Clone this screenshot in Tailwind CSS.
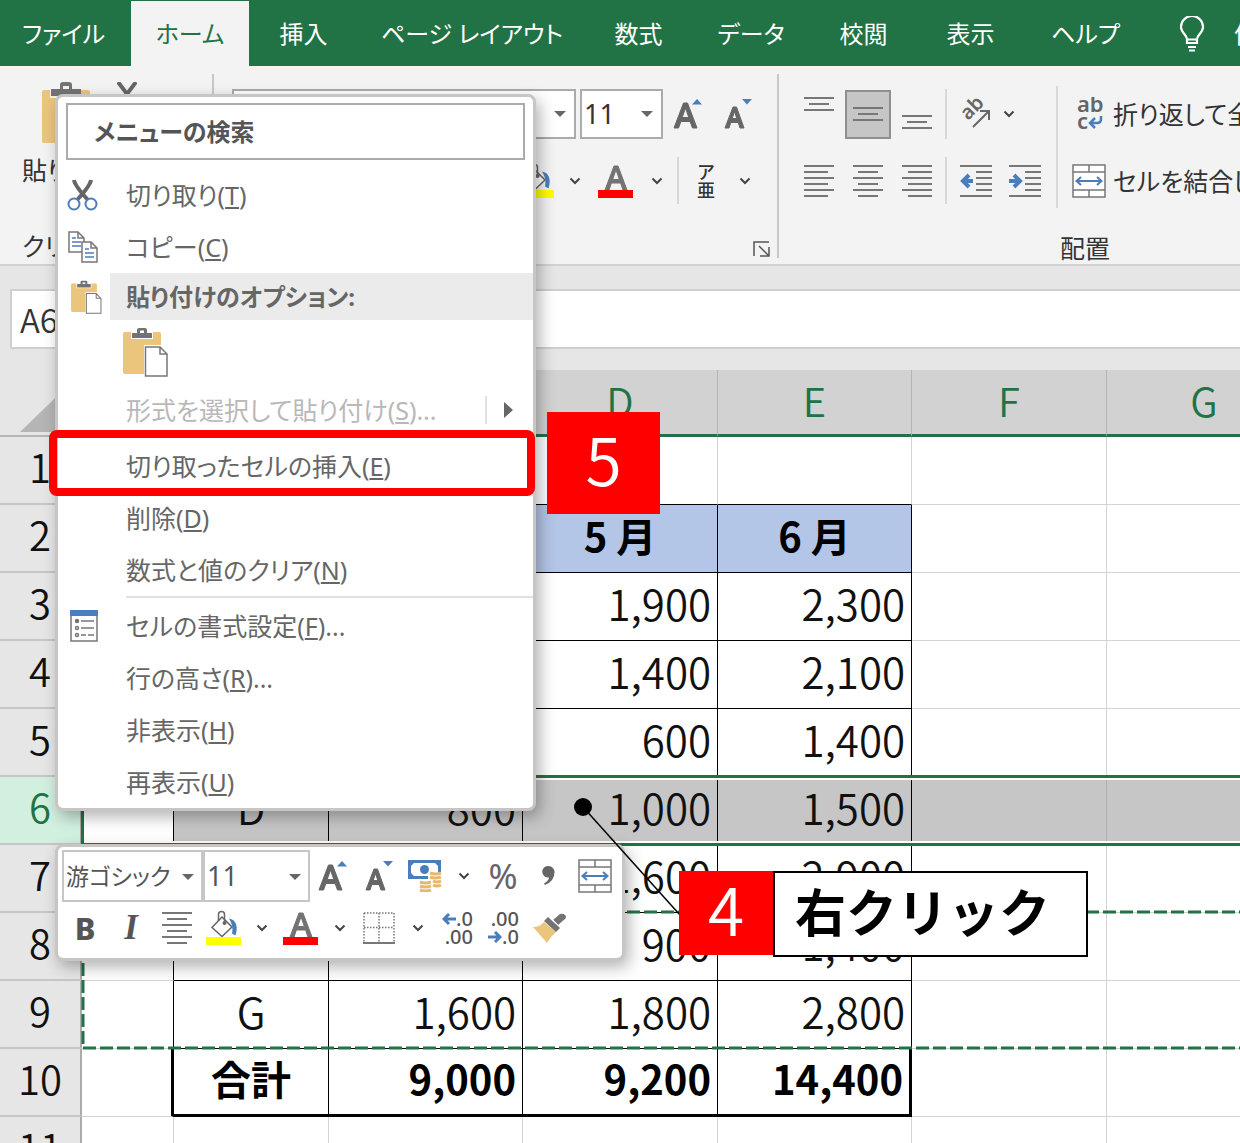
<!doctype html>
<html lang="ja">
<head>
    <meta charset="UTF-8">
    <meta name="viewport" content="width=device-width, initial-scale=1.0">
    <title>Excel</title>
    <script src="https://cdn.jsdelivr.net/npm/@tailwindcss/browser@4"></script>
</head>
<body class="bg-white">

<!-- shared icons -->
<svg class="hidden">
    <symbol id="chevron" viewBox="0 0 12 8"><path d="M1.500 1.500 6 6l4.500-4.500" fill="none" stroke="#444" stroke-width="2"/></symbol>
    <symbol id="arrow" viewBox="0 0 12 6"><path d="M0 0h12L6 6z" fill="#666"/></symbol>
    <symbol id="grow" viewBox="0 0 30 32">
        <path d="M1 30 10.500 5h4L24 30h-4.500l-2.400-6.500H7.900L5.500 30zM9.200 19.500h6.600L12.500 10z" fill="#666" stroke="#666"/>
        <path d="M19 6.500 24 1l5 5.500z" fill="#4a7ebb"/>
    </symbol>
    <symbol id="shrink" viewBox="0 0 30 32">
        <path d="M2 30 10 9h3.500L21 30h-4l-1.800-5.500H7.800L6 30zM9.200 20.500h4.600L11.500 13.500z" fill="#666" stroke="#666"/>
        <path d="M19 1h10l-5 5.500z" fill="#4a7ebb"/>
    </symbol>
    <symbol id="fill" viewBox="0 0 36 36">
        <path d="M17 7 7 17.500 17 26.500 27 17z" fill="#fff" stroke="#666" stroke-width="1.500"/>
        <path d="M13.500 11V4.500a3 3 0 0 1 6 0V13" fill="none" stroke="#666" stroke-width="1.500"/>
        <circle cx="19.500" cy="13" r="2" fill="#666"/>
        <path d="M24 8.500c7 1 9.500 8 6.500 17l-3.500-2c1-5 .500-9-3-15z" fill="#4a7ebb"/>
        <path d="M1 27h35v8H1z" fill="#ff0"/>
    </symbol>
    <symbol id="fontcolor" viewBox="0 0 36 36">
        <path d="M7 27 16 3h4l9 24h-4l-2.400-7h-9.200L11 27zM14.600 16.500h6.800L18 6.800z" fill="#737373" stroke="#737373"/>
        <path d="M0 27h35v8H0z" fill="red"/>
    </symbol>
    <symbol id="merge" viewBox="0 0 34 34">
        <path d="M1 1h32v32H1zM1 8h32M1 26h32M17 1v7M17 26v7" fill="#fff" stroke="#777" stroke-width="1.500"/>
        <path d="M5 17h24M9 13l-4.500 4L9 21M25 13l4.500 4-4.500 4" fill="none" stroke="#4a7ebb" stroke-width="2"/>
    </symbol>
    <symbol id="paste" viewBox="0 0 46 50">
        <rect x="1" y="5" width="38" height="42" rx="2" fill="#ecc57d"/>
        <path d="M9 4h22v8H9z" fill="#fff"/>
        <path d="M10 11V6h5V3q0-2 2-2h6q2 0 2 2v3h5v5zM18 3.500V6h4V3.500z" fill="#737373" fill-rule="evenodd"/>
        <path d="M22 18h18l7 7v26H22z" fill="#fff"/>
        <path d="M23.500 20H38l7 7v22H23.500zM38 20v7h7" fill="#fff" stroke="#777" stroke-width="1.500"/>
    </symbol>
    <symbol id="lines" viewBox="0 0 30 32">
        <path d="M0 1h30M5 7h20M0 13h30M5 19h20M0 25h30M5 31h20" stroke="#777" stroke-width="2"/>
    </symbol>
</svg>

<div class="relative h-screen overflow-hidden whitespace-nowrap bg-white font-['Noto_Sans','Noto_Sans_CJK_JP',sans-serif] text-[25px] leading-[32px] text-[#333]">

    <!-- tabs -->
    <nav class="flex h-[66px] bg-[#217346] pt-px text-[24px] text-white [font-feature-settings:'palt']">
        <button class="w-[131px] shrink-0 pr-1">ファイル</button>
        <button class="w-[118px] shrink-0 bg-[#f3f3f3] text-[#217346]">ホーム</button>
        <button class="w-[109px] shrink-0">挿入</button>
        <button class="w-[228px] shrink-0">ページ レイアウト</button>
        <button class="w-[105px] shrink-0">数式</button>
        <button class="w-[120px] shrink-0">データ</button>
        <button class="w-[105px] shrink-0">校閲</button>
        <button class="w-[109px] shrink-0">表示</button>
        <button class="w-[121px] shrink-0">ヘルプ</button>
        <button class="flex shrink-0 items-center gap-7 pl-8">
            <svg class="h-9 w-7" viewBox="0 0 28 36" fill="none" stroke="#fff" stroke-width="2.200">
                <path d="M9 27v-4c0-4-6-6-6-12a11 11 0 0 1 22 0c0 6-6 8-6 12v4zM9 23.500h10M10 31h8M11 34.500h6"/>
            </svg>
            何をしますか
        </button>
    </nav>

    <!-- ribbon -->
    <div class="flex h-[200px] border-b-2 border-[#d2d2d2] bg-[#f3f3f3] pt-2 [font-feature-settings:'palt']">
        <section class="flex h-[184px] w-[214px] shrink-0 flex-col justify-between border-r-2 border-[#c8c8c8] pl-[22px]">
            <div class="flex pt-2">
                <button class="flex flex-col items-start gap-2">
                    <svg class="ml-5 h-[64px] w-[50px]" viewBox="0 0 50 64">
                        <rect y="8" width="48" height="53" rx="2" fill="#ecc57d"/>
                        <path d="M8 6h31v10H8z" fill="#f3f3f3"/>
                        <path d="M9 14V7h9V3q0-3 3-3h6q3 0 3 3v4h9v7zM21 4v3h6V4z" fill="#737373" fill-rule="evenodd"/>
                    </svg>
                    <span>貼り付け</span>
                </button>
                <svg class="h-5 w-5" viewBox="0 0 20 20"><path d="m1 0 9 12L19 0M10 12l-5 7M10 12l5 7" fill="none" stroke="#666" stroke-width="4"/></svg>
            </div>
            <h2 class="-mb-1">クリップボード</h2>
        </section>

        <section class="h-[184px] w-[565px] shrink-0 border-r-2 border-[#c8c8c8] pt-[15px] pl-[18px]">
            <div class="flex items-center">
                <label class="relative mr-1">
                    <select aria-label="フォント" class="h-[50px] w-[344px] appearance-none border-2 border-[#ababab] bg-white px-1"><option></option></select>
                    <svg class="absolute top-[22px] right-[10px] h-[6px] w-3"><use href="#arrow"/></svg>
                </label>
                <label class="relative">
                    <select aria-label="フォント サイズ" class="h-[50px] w-[83px] appearance-none border-2 border-[#ababab] bg-white px-[2px] text-[27px]"><option>11</option></select>
                    <svg class="absolute top-[22px] right-[10px] h-[6px] w-3"><use href="#arrow"/></svg>
                </label>
                <button class="flex w-[50px] justify-center"><svg class="h-8 w-[30px]"><use href="#grow"/></svg></button>
                <button class="flex w-[50px] justify-center"><svg class="h-8 w-[30px]"><use href="#shrink"/></svg></button>
            </div>
            <div class="mt-[18px] flex h-[47px] items-center justify-end pr-4">
                <button class="flex w-[46px] justify-center"><svg class="h-9 w-9"><use href="#fill"/></svg></button>
                <button class="flex w-8 justify-center"><svg class="h-2 w-3"><use href="#chevron"/></svg></button>
                <button class="flex w-[50px] justify-center"><svg class="h-9 w-9"><use href="#fontcolor"/></svg></button>
                <button class="mr-1 flex w-8 justify-center"><svg class="h-2 w-3"><use href="#chevron"/></svg></button>
                <span class="h-full border-l-2 border-[#d8d8d8]"></span>
                <button class="ml-1 flex w-[46px] flex-col items-center text-[18px] leading-[18px] font-medium"><span>ア</span><span>亜</span></button>
                <button class="flex w-8 justify-center"><svg class="h-2 w-3"><use href="#chevron"/></svg></button>
            </div>
            <div class="mt-9 flex justify-end pr-[6px]">
                <button><svg class="h-[18px] w-[18px]" viewBox="0 0 18 18" fill="none" stroke="#555" stroke-width="1.500"><path d="M1 16V2h15M6 6l9 9M16 7v9H7"/></svg></button>
            </div>
        </section>

        <section class="w-[700px] shrink-0 pl-[15px]">
            <div class="flex">
                <div class="mt-[15px] grid grid-cols-[repeat(3,49px)] grid-rows-[50px_47px] place-items-center gap-y-[18px]">
                    <button class="pb-5"><svg class="h-4 w-[30px]" viewBox="0 0 30 16"><path d="M0 2h30M5 8h20M0 14h30" stroke="#777" stroke-width="2"/></svg></button>
                    <button class="flex h-[49px] w-[46px] items-center justify-center border-2 border-[#8f8f8f] bg-[#c6c6c6]"><svg class="h-4 w-[30px]" viewBox="0 0 30 16"><path d="M0 2h30M5 8h20M0 14h30" stroke="#777" stroke-width="2"/></svg></button>
                    <button class="pt-4"><svg class="h-4 w-[30px]" viewBox="0 0 30 16"><path d="M0 2h30M5 8h20M0 14h30" stroke="#777" stroke-width="2"/></svg></button>
                    <button><svg class="h-8 w-[30px]" viewBox="0 0 30 32"><path d="M0 1h30M0 7h24M0 13h30M0 19h24M0 25h30M0 31h24" stroke="#777" stroke-width="2"/></svg></button>
                    <button><svg class="h-8 w-[30px]"><use href="#lines"/></svg></button>
                    <button><svg class="h-8 w-[30px]" viewBox="0 0 30 32"><path d="M0 1h30M6 7h24M0 13h30M6 19h24M0 25h30M6 31h24" stroke="#777" stroke-width="2"/></svg></button>
                </div>
                <div class="mt-[15px] ml-1 flex flex-col gap-[18px]">
                    <span class="h-[50px] border-l-2 border-[#d8d8d8]"></span>
                    <span class="h-[47px] border-l-2 border-[#d8d8d8]"></span>
                </div>
                <div class="mt-[15px] ml-1 grid grid-cols-[repeat(2,49px)] grid-rows-[50px_47px] place-items-center gap-y-[18px]">
                    <button><svg class="h-8 w-8" viewBox="0 0 32 32">
                        <text transform="translate(8 23) rotate(-45)" font-size="20" font-weight="600" fill="#666">ab</text>
                        <path d="M13 29 28 14M20 13h9v9" fill="none" stroke="#666" stroke-width="2"/>
                    </svg></button>
                    <button class="mr-8"><svg class="h-2 w-3"><use href="#chevron"/></svg></button>
                    <button><svg class="h-8 w-8" viewBox="0 0 32 32">
                        <path d="M0 1h32M16 7h16M16 13h16M16 19h16M16 25h16M0 31h32" stroke="#777" stroke-width="2"/>
                        <path d="M13 16H3M9 10l-6 6 6 6" fill="none" stroke="#4a7ebb" stroke-width="4"/>
                    </svg></button>
                    <button><svg class="h-8 w-8" viewBox="0 0 32 32">
                        <path d="M0 1h32M16 7h16M16 13h16M16 19h16M16 25h16M0 31h32" stroke="#777" stroke-width="2"/>
                        <path d="M0 16h10M5 10l6 6-6 6" fill="none" stroke="#4a7ebb" stroke-width="4"/>
                    </svg></button>
                </div>
                <span class="mt-3 ml-[7px] h-[122px] border-l-2 border-[#d8d8d8]"></span>
                <div class="mt-[15px] ml-[14px] grid grid-rows-[50px_47px] gap-y-[18px]">
                    <button class="flex items-center gap-[7px]">
                        <svg class="h-[34px] w-[34px]" viewBox="0 0 34 34">
                            <text x="5" y="15" font-size="22" font-weight="600" fill="#666">ab</text>
                            <text x="5" y="32" font-size="22" font-weight="600" fill="#666">c</text>
                            <path d="M29 19v3q0 4-4 4h-6M23 21l-5 5 5 5" fill="none" stroke="#4a7ebb" stroke-width="2.500"/>
                        </svg>
                        折り返して全体を表示する
                    </button>
                    <button class="flex items-center gap-[7px]"><svg class="h-[34px] w-[34px]"><use href="#merge"/></svg>セルを結合して中央揃え</button>
                </div>
            </div>
            <h2 class="mt-6 pl-[266px]">配置</h2>
        </section>
    </div>

    <!-- formula bar -->
    <div class="flex h-[104px] items-center bg-[#e6e6e6] pl-[10px]">
        <input aria-label="名前ボックス" value="A6" class="mb-[-2px] h-[60px] w-[300px] border-2 border-[#cfcfcf] bg-white px-2 font-['Noto_Sans_CJK_JP',sans-serif] text-[33px] font-[350]">
        <input aria-label="数式バー" class="mb-[-2px] ml-4 h-[60px] flex-1 border-y-2 border-[#cfcfcf] bg-white">
    </div>

    <!-- worksheet -->
    <div class="relative font-['Noto_Sans_CJK_JP',sans-serif] text-[42px] leading-[54px] font-[350] text-[#111]">
        <table class="w-max table-fixed border-separate border-spacing-0">
            <colgroup>
                <col class="w-[82px]"><col class="w-[92px]"><col class="w-[155px]"><col class="w-[194px]">
                <col class="w-[195px]"><col class="w-[194px]"><col class="w-[195px]"><col class="w-[195px]">
            </colgroup>
            <thead id="columns"></thead>
            <tbody id="rows"></tbody>
        </table>

        <!-- selected row outline -->
        <div class="absolute top-[405px] right-0 left-[81px] h-[71px] border-y-3 border-l-3 border-[#217346]">
            <div class="h-full border-y-2 border-white"></div>
        </div>
        <!-- cut range -->
        <svg class="absolute top-[540px] left-[81px] h-[140px] w-full" fill="none" stroke="#217346" stroke-width="3" stroke-dasharray="13 4">
            <path d="M2 2v136"/>
            <path d="M2 2h1400"/>
            <path d="M2 138h1400"/>
        </svg>
    </div>

    <!-- context menu -->
    <div class="absolute top-[94px] left-[55px] w-[481px] rounded-lg border-3 border-[#c8c6c4] bg-white text-[#666] shadow-[4px_6px_16px_rgba(0,0,0,0.3)] [font-feature-settings:'palt']">
        <input aria-label="メニューの検索" placeholder="メニューの検索" class="mt-[6px] ml-2 h-[57px] w-[459px] border-2 border-[#ababab] px-[26px] text-[24px] font-bold placeholder:text-[#555]">
        <ul class="mt-[9px]">
            <li><button class="flex h-[52px] w-full items-center">
                <svg class="mr-[28px] ml-[9px] h-8 w-[31px]" viewBox="0 0 31 32" fill="none">
                    <path d="M7 1q1 6 14 20M24 1q-1 6-14 20" stroke="#666" stroke-width="4"/>
                    <circle cx="7" cy="25" r="5.500" stroke="#4a7ebb" stroke-width="2"/><circle cx="24" cy="25" r="5.500" stroke="#4a7ebb" stroke-width="2"/>
                </svg>
                切り取り(<u>T</u>)</button></li>
            <li><button class="flex h-[52px] w-full items-center">
                <svg class="mr-[27px] ml-[10px] h-8 w-[31px]" viewBox="0 0 31 32" fill="#fff" stroke="#777" stroke-width="1.500">
                    <path d="M1 1h9l6 6v14H1zM10 1v6h6"/><path d="M4 7h4M4 11h9M4 15h9" stroke="#4a7ebb"/>
                    <path d="M14 11h9l6 6v14H14zM23 11v6h6"/><path d="M17 18h4M17 22h9M17 26h9" stroke="#4a7ebb"/>
                </svg>
                コピー(<u>C</u>)</button></li>
            <li class="flex h-[47px] items-center">
                <svg class="mr-2 ml-3 h-[34px] w-8"><use href="#paste"/></svg>
                <h3 class="flex h-full flex-1 items-center bg-[#ebebeb] pl-4 text-[24px] font-bold">貼り付けのオプション:</h3></li>
            <li class="flex h-16 items-center pl-[64px]"><button aria-label="貼り付け"><svg class="h-[50px] w-[46px]"><use href="#paste"/></svg></button></li>
            <li class="mb-1"><button disabled class="flex h-[52px] w-full items-center pl-[68px] text-[#b8b8b8]">形式を選択して貼り付け(<u>S</u>)...
                <svg class="mr-5 ml-auto h-7 w-7" viewBox="0 0 28 28"><path d="M1 0v28" stroke="#e1e1e1" stroke-width="2"/><path d="M19 6v16l9-8z" fill="#666"/></svg></button></li>
            <li><button class="flex h-[52px] w-full items-center pl-[68px]">切り取ったセルの挿入(<u>E</u>)</button></li>
            <li><button class="flex h-[52px] w-full items-center pl-[68px]">削除(<u>D</u>)</button></li>
            <li><button class="flex h-[52px] w-full items-center pl-[68px]">数式と値のクリア(<u>N</u>)</button></li>
            <li class="mb-[2px] ml-[68px] border-t-2 border-[#e1e1e1]"></li>
            <li><button class="flex h-[52px] w-full items-center">
                <svg class="mr-[28px] ml-3 h-8 w-7" viewBox="0 0 28 32" fill="none" stroke="#777" stroke-width="1.500">
                    <path d="M1 1h26v30H1z"/><path d="M0 0h28v6H0z" fill="#4a7ebb" stroke="none"/>
                    <path d="M11 11h13M11 18h13M11 25h5M18 25h6"/><circle cx="7" cy="11" r="1.500" fill="#666"/><circle cx="7" cy="18" r="1.500"/><circle cx="7" cy="25" r="1.500"/>
                </svg>
                セルの書式設定(<u>F</u>)...</button></li>
            <li><button class="flex h-[52px] w-full items-center pl-[68px]">行の高さ(<u>R</u>)...</button></li>
            <li><button class="flex h-[52px] w-full items-center pl-[68px]">非表示(<u>H</u>)</button></li>
            <li><button class="flex h-[52px] w-full items-center pl-[68px]">再表示(<u>U</u>)</button></li>
        </ul>
    </div>

    <!-- mini toolbar -->
    <div class="absolute top-[844px] left-[55px] w-[570px] rounded-lg border-3 border-[#c8c6c4] bg-white px-1 pt-[3px] pb-[5px] text-[#555] shadow-[4px_6px_16px_rgba(0,0,0,0.3)]">
        <div class="flex h-[52px] items-center">
            <label class="relative">
                <select aria-label="フォント" class="h-[52px] w-[141px] appearance-none border-2 border-[#c6c6c6] px-[2px] text-[23px] [font-feature-settings:'palt']"><option>游ゴシック</option></select>
                <svg class="absolute top-[24px] right-[9px] h-[6px] w-3"><use href="#arrow"/></svg>
            </label>
            <label class="relative">
                <select aria-label="フォント サイズ" class="h-[52px] w-[107px] appearance-none border-2 border-[#c6c6c6] px-[2px] text-[27px]"><option>11</option></select>
                <svg class="absolute top-[24px] right-[9px] h-[6px] w-3"><use href="#arrow"/></svg>
            </label>
            <button class="flex w-[46px] justify-center"><svg class="h-8 w-[30px]"><use href="#grow"/></svg></button>
            <button class="flex w-[46px] justify-center"><svg class="h-8 w-[30px]"><use href="#shrink"/></svg></button>
            <button class="flex w-[46px] justify-center"><svg class="h-8 w-[34px]" viewBox="0 0 34 32">
                <path d="M0 0h33v19H0z" fill="#4a7ebb"/><path d="M6 3h21l3 3v7l-3 3H6l-3-3V6z" fill="#fff"/><circle cx="16.500" cy="9.500" r="4.500" fill="#4a7ebb"/>
                <path d="M20 12h14v14H23v6H10V20h10z" fill="#fff"/>
                <g fill="none" stroke="#e5b96d" stroke-width="3"><path d="M22 13q5 2 11 0M22 17q5 2 11 0M25 21q4 2 8 0M25 25q4 2 8 0M12 22q5 2 11 0M12 26q5 2 11 0M12 30q5 2 11 0"/></g>
            </svg></button>
            <button class="flex w-8 justify-center"><svg class="h-2 w-3"><use href="#chevron"/></svg></button>
            <button class="w-[46px] text-[35px] text-[#666]">%</button>
            <button class="flex w-[46px] justify-center"><svg class="h-5 w-[14px]" viewBox="0 0 14 20"><path d="M6.500 0a6 6 0 0 1 6 6.500Q12.500 15 3 19l-1-1.500q5-3 5-6A5.800 5.800 0 1 1 6.500 0z" fill="#666"/></svg></button>
            <button class="flex w-[46px] justify-center"><svg class="h-[34px] w-[34px]"><use href="#merge"/></svg></button>
        </div>
        <div class="flex h-[51px] items-center">
            <button class="w-[46px] text-[31px] font-extrabold">B</button>
            <button class="w-[46px] font-['Liberation_Serif',serif] text-[35px] font-bold italic">I</button>
            <button class="flex w-[46px] justify-center"><svg class="h-8 w-[30px]"><use href="#lines"/></svg></button>
            <button class="flex w-[46px] justify-center"><svg class="h-9 w-9"><use href="#fill"/></svg></button>
            <button class="flex w-8 justify-center"><svg class="h-2 w-3"><use href="#chevron"/></svg></button>
            <button class="flex w-[46px] justify-center"><svg class="h-9 w-9"><use href="#fontcolor"/></svg></button>
            <button class="flex w-8 justify-center"><svg class="h-2 w-3"><use href="#chevron"/></svg></button>
            <button class="flex w-[46px] justify-center"><svg class="h-8 w-8" viewBox="0 0 32 32" fill="none" stroke="#777">
                <path d="M1 1h30v29M1 1v29M16 1v29M1 15.500h30" stroke-width="1.500" stroke-dasharray="1.500 1.500"/><path d="M0 31h32" stroke-width="2"/>
            </svg></button>
            <button class="flex w-8 justify-center"><svg class="h-2 w-3"><use href="#chevron"/></svg></button>
            <button class="flex w-[46px] flex-col items-end pr-[7px] text-[20px] leading-[18px] font-medium">
                <span class="flex items-center"><svg class="h-3 w-[14px]" viewBox="0 0 14 12"><path d="M14 6H3M7 1 2 6l5 5" fill="none" stroke="#4a7ebb" stroke-width="3"/></svg>.0</span>
                <span>.00</span>
            </button>
            <button class="flex w-[46px] flex-col items-end pr-[7px] text-[20px] leading-[18px] font-medium">
                <span>.00</span>
                <span class="flex items-center"><svg class="h-3 w-[14px]" viewBox="0 0 14 12"><path d="M0 6h11M7 1l5 5-5 5" fill="none" stroke="#4a7ebb" stroke-width="3"/></svg>.0</span>
            </button>
            <button class="flex w-[46px] justify-center"><svg class="h-[30px] w-[34px]" viewBox="0 0 34 30">
                <path d="M1 14q7 0 11-5l12 10q-5 4-9 11z" fill="#ecc57d"/>
                <path d="m12 8 4-4 12 11-4 4zM21 7l7-6q3-1 5 1t0 4l-7 6z" fill="#737373"/>
                <path d="m19 5 9 9" stroke="#fff" fill="none"/>
            </svg></button>
        </div>
    </div>

    <!-- callouts -->
    <div class="absolute top-[430px] left-[49px] h-[66px] w-[486px] rounded-lg border-8 border-[#f00]"></div>
    <div class="absolute top-[412px] left-[547px] flex h-[102px] w-[113px] items-center justify-center bg-[#f00] pb-3 font-['Noto_Sans_CJK_JP',sans-serif] text-[66px] leading-none font-[350] text-white">5</div>
    <svg class="absolute top-[797px] left-[573px] h-[120px] w-[110px]"><path d="M10 10l97 108" stroke="#000" stroke-width="1.500"/><circle cx="10" cy="10" r="9"/></svg>
    <div class="absolute top-[871px] left-[679px] flex h-[86px] font-['Noto_Sans_CJK_JP',sans-serif] leading-none">
        <div class="flex h-[84px] w-[94px] items-center justify-center bg-[#f00] pb-3 text-[66px] font-[350] text-white">4</div>
        <div class="flex w-[315px] items-center border-2 border-black bg-white pb-2 pl-5 text-[51px] font-bold text-black">右クリック</div>
    </div>
</div>

<script>
    const columns = ['A', 'B', 'C', 'D', 'E', 'F', 'G'];
    const cells = {
        2: ['', '', '', '5 月', '6 月'],
        3: ['', '', '', '1,900', '2,300'],
        4: ['', '', '', '1,400', '2,100'],
        5: ['', '', '', '600', '1,400'],
        6: ['', 'D', '800', '1,000', '1,500'],
        7: ['', '', '', '1,600', '2,900'],
        8: ['', '', '', '900', '1,400'],
        9: ['', 'G', '1,600', '1,800', '2,800'],
        10: ['', '合計', '9,000', '9,200', '14,400'],
    };

    const corner = '<th class="h-[67px] border-b-2 border-[#b5b5b5] bg-[#e6e6e6] p-0"><svg class="ml-5 h-[58px] w-[60px]" viewBox="0 0 60 58"><path d="M60 0v58H0z" fill="#b5b5b5"/></svg></th>';
    document.getElementById('columns').innerHTML = '<tr>' + corner + columns.map(name =>
        `<th class="h-[67px] border-r border-b-3 border-r-[#b5b5b5] border-b-[#217346] bg-[#d2d2d2] px-0 pt-0 pb-1 text-[40px] font-[350] text-[#217346]">${ name }</th>`
    ).join('') + '</tr>';

    function cellClass(row, col) {
        const list = ['h-[68px] pt-0 pb-2'];
        const inTable = row >= 2 && row <= 10;
        const dataCol = col >= 1 && col <= 4;
        // right edge
        if (row === 10 && (col === 0 || col === 4)) list.push('border-r-3 border-r-black');
        else if (inTable && col <= 4) list.push('border-r border-r-black');
        else if (row === 6) list.push('border-r border-r-[#b0b0b0]');
        else list.push('border-r border-r-[#d4d4d4]');
        // bottom edge
        if (row === 10 && dataCol) list.push('border-b-3 border-b-black');
        else if (row < 10 && dataCol) list.push('border-b border-b-black');
        else list.push('border-b border-b-[#d4d4d4]');

        list.push(row === 2 || col < 2 ? 'px-0 text-center' : 'pr-[6px] pl-0 text-right');
        if (row === 2 || row === 10) list.push('text-[40px] font-bold text-black');
        if (row === 2 && dataCol) list.push('bg-[#b4c6e7]');
        if (row === 6 && col >= 1) list.push('bg-[#c6c6c6]');
        return list.join(' ');
    }

    let html = '';
    for (let row = 1; row <= 11; row++) {
        const head = row === 6 ? 'bg-[#d2f0e0] text-[#217346]' : 'bg-[#e6e6e6]';
        html += `<tr><th class="h-[68px] border-r-2 border-b-2 border-r-[#ababab] border-b-[#c6c6c6] px-0 pt-0 pb-2 text-[40px] font-[350] ${ head }">${ row }</th>`;
        columns.forEach((name, col) => {
            html += `<td class="${ cellClass(row, col) }">${ (cells[row] || [])[col] || '' }</td>`;
        });
        html += '</tr>';
    }
    document.getElementById('rows').innerHTML = html;
</script>
</body>
</html>
